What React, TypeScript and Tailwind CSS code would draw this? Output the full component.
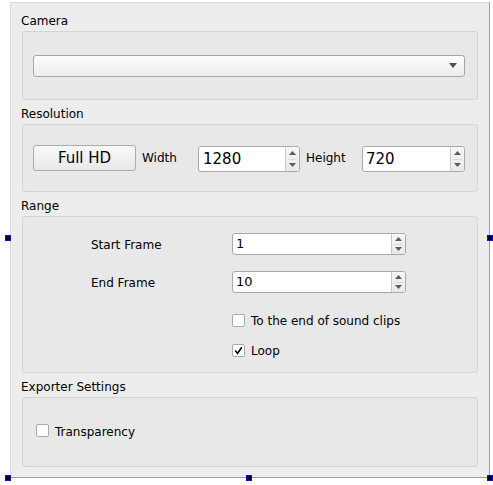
import React from "react";

function UpDown() {
  return (
    <div className="flex w-[14px] flex-col border-l border-[#c9c9c9] bg-gradient-to-b from-[#f7f7f7] to-[#e9e9e9] rounded-r-[2px]">
      <div className="flex flex-1 items-center justify-center">
        <svg width="7" height="4" viewBox="0 0 7 4">
          <path d="M0 4 L3.5 0 L7 4 Z" fill="#5a5a5a" />
        </svg>
      </div>
      <div className="h-px bg-[#d8d8d8] mx-[2px]" />
      <div className="flex flex-1 items-center justify-center">
        <svg width="7" height="4" viewBox="0 0 7 4">
          <path d="M0 0 L3.5 4 L7 0 Z" fill="#5a5a5a" />
        </svg>
      </div>
    </div>
  );
}

function Spin({ value, cls, textCls }: { value: string; cls: string; textCls: string }) {
  return (
    <div className={"flex rounded-[3px] border border-[#a9a9a9] bg-white " + cls}>
      <div className={"flex flex-1 items-center " + textCls}>{value}</div>
      <UpDown />
    </div>
  );
}

function Check({ checked, label }: { checked?: boolean; label: string }) {
  return (
    <div className="flex items-center h-[14px]">
      <div className="flex h-[13px] w-[13px] items-center justify-center rounded-[2px] border border-[#a9a9a9] bg-white">
        {checked && (
          <svg width="9" height="9" viewBox="0 0 9 9">
            <path d="M1.2 4.6 L3.5 7.4 L7.8 1.2" stroke="#000" strokeWidth="1.6" fill="none" />
          </svg>
        )}
      </div>
      <span className="ml-[6px] pt-[2px] text-[12px] leading-[14px]">{label}</span>
    </div>
  );
}

function Handle({ cls }: { cls: string }) {
  return <div className={"absolute h-[6px] w-[6px] border border-[#0000ff] bg-black " + cls} />;
}

export default function App() {
  return (
    <div className="relative h-[485px] w-[493px] overflow-hidden bg-white font-['DejaVu_Sans',sans-serif] text-black">
      <div className="ml-[10px] mt-[2px] flex h-[476px] w-[480px] flex-col border-b border-l border-r border-t border-b-[#9c9c9c] border-l-[#d9d9d9] border-r-[#9c9c9c] border-t-[#d9d9d9] bg-[#ededed]">
        {/* Camera */}
        <div className="mt-[11px] pl-[10px] text-[12px] leading-[14px]">Camera</div>
        <div className="ml-[11px] mt-[3px] flex h-[69px] w-[456px] items-center rounded-[3px] border border-[#d4d4d4] bg-[#e8e8e8] pl-[10px]">
          <div className="flex h-[22px] w-[432px] items-center justify-end rounded-[3px] border border-[#a6a6a6] bg-gradient-to-b from-[#fdfdfd] to-[#ececec] pr-[7px]">
            <svg width="8" height="5" viewBox="0 0 8 5">
              <path d="M0 0 L8 0 L4 5 Z" fill="#505050" />
            </svg>
          </div>
        </div>

        {/* Resolution */}
        <div className="mt-[7px] pl-[10px] text-[12px] leading-[14px]">Resolution</div>
        <div className="ml-[11px] mt-[3px] flex h-[68px] w-[456px] items-center rounded-[3px] border border-[#d4d4d4] bg-[#e8e8e8] pl-[10px]">
          <div className="flex h-[26px] w-[103px] items-center justify-center rounded-[3px] border border-[#acacac] bg-gradient-to-b from-[#f8f8f8] to-[#e9e9e9] text-[15px]">
            Full HD
          </div>
          <div className="w-[62px] pl-[6px] text-[12px]">Width</div>
          <Spin value="1280" cls="h-[26px] w-[102px] mt-[2px]" textCls="pl-[4px] text-[15px]" />
          <div className="w-[62px] pl-[6px] text-[12px]">Height</div>
          <Spin value="720" cls="h-[26px] w-[103px] mt-[2px]" textCls="pl-[3px] text-[15px]" />
        </div>

        {/* Range */}
        <div className="mt-[7px] pl-[10px] text-[12px] leading-[14px]">Range</div>
        <div className="ml-[11px] mt-[3px] flex h-[157px] w-[456px] flex-col rounded-[3px] border border-[#d4d4d4] bg-[#e8e8e8] pl-[68px] pt-[16px]">
          <div className="flex h-[22px] items-center">
            <div className="w-[141px] pt-[1px] text-[12px]">Start Frame</div>
            <Spin value="1" cls="h-[22px] w-[174px]" textCls="pl-[3px] text-[13px]" />
          </div>
          <div className="mt-[16px] flex h-[22px] items-center">
            <div className="w-[141px] pt-[1px] text-[12px]">End Frame</div>
            <Spin value="10" cls="h-[22px] w-[174px]" textCls="pl-[3px] text-[13px]" />
          </div>
          <div className="ml-[141px] mt-[20px]">
            <Check label="To the end of sound clips" />
          </div>
          <div className="ml-[141px] mt-[16px]">
            <Check checked label="Loop" />
          </div>
        </div>

        {/* Exporter Settings */}
        <div className="mt-[7px] pl-[10px] text-[12px] leading-[14px]">Exporter Settings</div>
        <div className="ml-[11px] mt-[3px] flex h-[70px] w-[456px] items-center rounded-[3px] border border-[#d4d4d4] bg-[#e8e8e8] pl-[13px] pb-[3px]">
          <Check label="Transparency" />
        </div>
      </div>

      <Handle cls="left-[5px] top-[235px]" />
      <Handle cls="left-[487px] top-[235px]" />
      <Handle cls="left-[5px] top-[475px]" />
      <Handle cls="left-[246px] top-[475px]" />
      <Handle cls="left-[487px] top-[475px]" />
    </div>
  );
}
